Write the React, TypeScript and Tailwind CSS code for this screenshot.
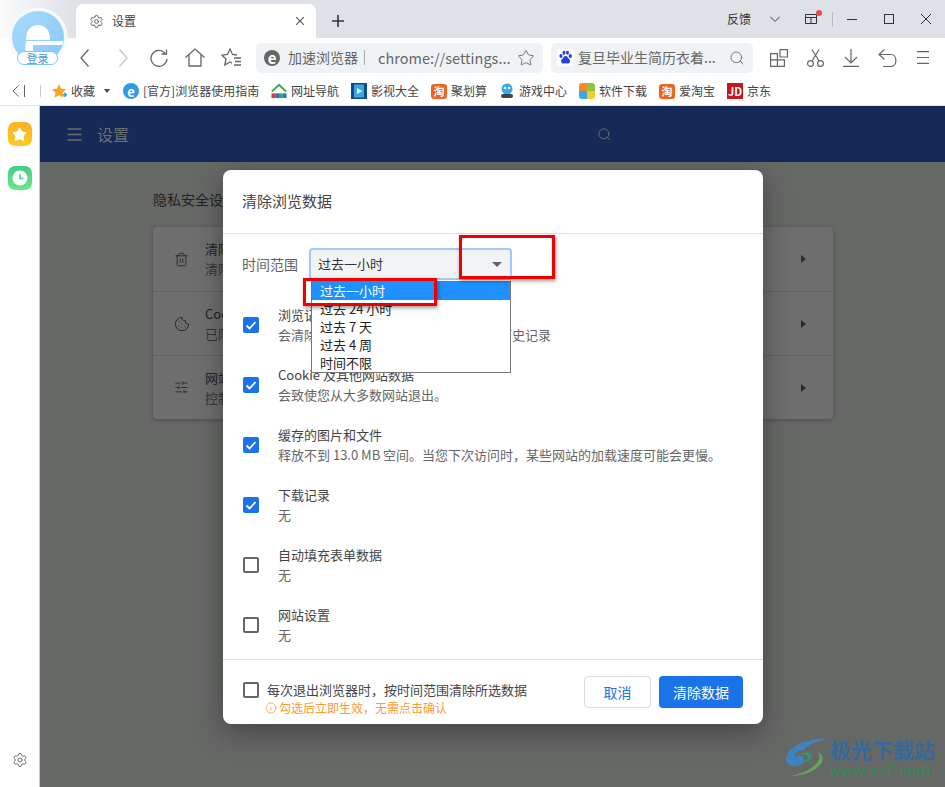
import { Cookie, Info, Menu, Search, Settings, SlidersHorizontal, Star, Trash2 } from 'lucide-react';

const bookmarks = [
    { label: '[官方]浏览器使用指南', icon: <OfficialIcon />, width: 'w-[148px]' },
    { label: '网址导航', icon: <NavIcon />, width: 'w-[80px]' },
    { label: '影视大全', icon: <FilmIcon />, width: 'w-[80px]' },
    { label: '聚划算', icon: <TaoIcon />, width: 'w-[68px]' },
    { label: '游戏中心', icon: <GameIcon />, width: 'w-[80px]' },
    { label: '软件下载', icon: <SoftIcon />, width: 'w-[80px]' },
    { label: '爱淘宝', icon: <TaoIcon />, width: 'w-[68px]' },
    { label: '京东', icon: <JdIcon />, width: 'w-[60px]' },
];

const options = ['过去一小时', '过去 24 小时', '过去 7 天', '过去 4 周', '时间不限'];

const dataRows = [
    { title: '浏览记录', detail: '会清除所有已同步的设备以及帐号中的历史记录', checked: true },
    { title: 'Cookie 及其他网站数据', detail: '会致使您从大多数网站退出。', checked: true },
    { title: '缓存的图片和文件', detail: '释放不到 13.0 MB 空间。当您下次访问时，某些网站的加载速度可能会更慢。', checked: true },
    { title: '下载记录', detail: '无', checked: true },
    { title: '自动填充表单数据', detail: '无', checked: false },
    { title: '网站设置', detail: '无', checked: false },
];

const settingsRows = [
    { title: '清除浏览数据', detail: '清除浏览记录、Cookie、缓存及其他数据', icon: <Trash2 className="size-[15px]" strokeWidth={1.5} /> },
    { title: 'Cookie 及其他网站数据', detail: '已阻止无痕模式下的第三方 Cookie', icon: <Cookie className="size-[16px]" strokeWidth={1.5} /> },
    { title: '网站设置', detail: '控制网站可以使用和显示什么信息', icon: <SlidersHorizontal className="size-[15px]" strokeWidth={1.5} /> },
];

export default function App() {
    return (
        <div className="relative flex h-[787px] w-[945px] flex-col overflow-hidden bg-white font-['Noto_Sans_CJK_SC','Liberation_Sans',sans-serif] text-[12px] text-[#444]">
            <TabStrip />
            <Toolbar />
            <BookmarkBar />
            <div className="flex min-h-0 flex-1 border-t border-[#e4e6ea]">
                <Sidebar />
                <SettingsPage />
            </div>
            <Logo />
            <ClearDataDialog />
            <Watermark />
        </div>
    );
}

function TabStrip() {
    return (
        <div className="flex h-[38px] shrink-0 items-end bg-[#dee1e6]">
            <div className="h-full w-[76px] bg-gradient-to-r from-[#fbfbfc] to-[#dee1e6]" />
            <div className="flex h-[34px] w-[240px] items-center rounded-t-[7px] bg-white pl-[13px] pr-[12px]">
                <Settings className="size-[15px] text-[#555]" strokeWidth={1.5} />
                <span className="ml-[8px] flex-1 text-[12px] text-[#444]">设置</span>
                <svg className="size-[8px]" viewBox="0 0 8 8" fill="none" stroke="#555" strokeWidth="1.1">
                    <path d="M0 0l8 8M8 0 0 8" />
                </svg>
            </div>
            <svg className="mb-[11px] ml-[16px] size-[12px]" viewBox="0 0 12 12" fill="none" stroke="#333" strokeWidth="1.6">
                <path d="M6 0v12M0 6h12" />
            </svg>
            <div className="mb-[6px] ml-auto flex h-[26px] items-center text-[#333]">
                <span className="text-[12px]">反馈</span>
                <svg className="ml-[19px] h-[6px] w-[10px]" viewBox="0 0 10 6" fill="none" stroke="#444" strokeWidth="1">
                    <path d="M0 .5l5 5 5-5" />
                </svg>
                <div className="relative ml-[25px]">
                    <svg className="block h-[10px] w-[12px]" viewBox="0 0 12 10" fill="none" stroke="#333" strokeWidth="1">
                        <path d="M.5.5h11v9H.5zM.5 3.500h11M6 3.500v6" />
                    </svg>
                    <span className="absolute right-[-5px] top-[-4px] size-[6px] rounded-full bg-[#ee4a4a]" />
                </div>
                <span className="ml-[15px] h-[15px] w-px bg-[#b5b8bd]" />
                <span className="ml-[14px] h-px w-[10px] bg-[#333]" />
                <span className="ml-[27px] size-[10px] border border-[#333]" />
                <svg className="ml-[27px] mr-[14px] size-[10px]" viewBox="0 0 10 10" fill="none" stroke="#333" strokeWidth="1">
                    <path d="M0 0l10 10M10 0 0 10" />
                </svg>
            </div>
        </div>
    );
}

function Toolbar() {
    return (
        <div className="flex h-[39px] shrink-0 items-center bg-white">
            <svg className="ml-[80px] h-[18px] w-[9px]" viewBox="0 0 9 18" fill="none" stroke="#666" strokeWidth="1.3">
                <path d="M8.500.5 1 9l7.500 8.500" />
            </svg>
            <svg className="ml-[30px] h-[18px] w-[9px]" viewBox="0 0 9 18" fill="none" stroke="#c4c4c4" strokeWidth="1.3">
                <path d="M.5.5 8 9 .5 17.500" />
            </svg>
            <svg className="ml-[22px] size-[18px]" viewBox="0 0 18 18" fill="none" stroke="#666" strokeWidth="1.3">
                <path d="M15 4A8 8 0 1 0 17 10M16.500 .5V5h-5" />
            </svg>
            <svg className="ml-[17px] h-[19px] w-[20px]" viewBox="0 0 20 19" fill="none" stroke="#666" strokeWidth="1.3">
                <path d="M.5 9.500 10 1l9.500 8.500M4 7v11h12V7" />
            </svg>
            <svg className="ml-[16px] h-[19px] w-[21px]" viewBox="0 0 21 19" fill="none" stroke="#666" strokeWidth="1.3">
                <path d="M16 7 11.500 6.500 9 1 6.500 6.500 1 7.200 5 11l-1.200 6L9 14l2 1.200" />
                <path d="M13 10h7M14 13.500h6M13 17h7" />
            </svg>
            <div className="ml-[14px] flex h-[30px] w-[287px] items-center rounded-[5px] bg-[#f0f3f6] pl-[8px] pr-[8px]">
                <span className="flex size-[16px] shrink-0 items-center justify-center rounded-full bg-[#666] text-[15px] font-bold leading-none text-white">
                    e
                </span>
                <span className="ml-[8px] text-[14px] text-[#666]">加速浏览器</span>
                <span className="ml-[6px] h-[15px] w-px bg-[#aaa]" />
                <span className="ml-[13px] flex-1 whitespace-nowrap text-[14.500px] text-[#666]">chrome://settings...</span>
                <Star className="size-[18px] text-[#666]" strokeWidth={1.2} />
            </div>
            <div className="ml-[8px] flex h-[30px] w-[202px] items-center rounded-[5px] bg-[#f0f3f6] pl-[6px] pr-[8px]">
                <svg className="size-[17px] shrink-0 rounded-[3px] bg-white" viewBox="0 0 17 17" fill="#2b3fd8">
                    <ellipse cx="4" cy="7" rx="1.600" ry="2" />
                    <ellipse cx="7" cy="3.800" rx="1.500" ry="2" />
                    <ellipse cx="10.500" cy="3.800" rx="1.500" ry="2" />
                    <ellipse cx="13.300" cy="7" rx="1.600" ry="2" />
                    <path d="M8.600 7c-2 0-2.200 2.200-3.600 3.200-1.600 1.200-1 4.300 1.500 4.300 1 0 1.400-.3 2.100-.3s1.200.3 2.100.3c2.500 0 3.100-3.100 1.500-4.300C11 9.200 10.600 7 8.600 7z" />
                </svg>
                <span className="ml-[4px] flex-1 truncate text-[14px] text-[#666]">复旦毕业生简历衣着...</span>
                <Search className="size-[16px] text-[#666]" strokeWidth={1.3} />
            </div>
            <svg className="ml-[17px] size-[18px]" viewBox="0 0 18 18" fill="none" stroke="#666" strokeWidth="1.2">
                <path d="M.6 4.600h6.800v6.200H.6zM.6 10.800h6.800v6.600H.6zM7.400 10.800h7v6.600h-7zM10 .6h7.400v7.400H10z" />
            </svg>
            <svg className="ml-[19px] h-[18px] w-[17px]" viewBox="0 0 17 18" fill="none" stroke="#666" strokeWidth="1.2">
                <circle cx="3.500" cy="14.500" r="2.900" />
                <circle cx="13.500" cy="14.500" r="2.900" />
                <path d="M5 12 12 .5M12 12 5 .5" />
            </svg>
            <svg className="ml-[19px] h-[18px] w-[16px]" viewBox="0 0 16 18" fill="none" stroke="#666" strokeWidth="1.2">
                <path d="M8 0v14M2 8l6 6 6-6M0 17.400h16" />
            </svg>
            <svg className="ml-[19px] h-[18px] w-[19px]" viewBox="0 0 19 18" fill="none" stroke="#666" strokeWidth="1.2">
                <path d="M6.500.5 1 5.500l5.500 5M1 5.500h12c6.500 0 6.500 12 0 12H5" />
            </svg>
            <svg className="ml-[20px] h-[13px] w-[12px]" viewBox="0 0 12 13" fill="none" stroke="#666" strokeWidth="1.1">
                <path d="M0 .6h12M0 6.500h12M0 12.400h12" />
            </svg>
        </div>
    );
}

function BookmarkBar() {
    return (
        <div className="flex h-[28px] shrink-0 items-center bg-white text-[#444]">
            <svg className="ml-[12px] h-[12px] w-[7px]" viewBox="0 0 7 12" fill="none" stroke="#666" strokeWidth="1">
                <path d="M6.500.5 1 6l5.500 5.500" />
            </svg>
            <span className="ml-[5px] h-[12px] w-px bg-[#666]" />
            <span className="ml-[15px] h-[12px] w-px bg-[#ccc]" />
            <svg className="ml-[10px] size-[17px]" viewBox="0 0 17 17" fill="#f8a521">
                <path d="M8 1l2.200 4.700 5 .6-3.700 3.500 1 5-4.500-2.500-4.500 2.500 1-5L1 6.300l5-.6z" />
                <path d="M12 11h4v1.500h-4zM13.300 9.500h1.500v4.500h-1.500z" fill="#2d9be8" />
            </svg>
            <span className="ml-[3px]">收藏</span>
            <span className="ml-[9px] mr-[13px] border-x-[3px] border-t-[4px] border-x-transparent border-t-[#444]" />
            {bookmarks.map((bookmark) => (
                <div key={bookmark.label} className={`flex items-center gap-[4px] ${bookmark.width}`}>
                    {bookmark.icon}
                    <span className="whitespace-nowrap">{bookmark.label}</span>
                </div>
            ))}
        </div>
    );
}

function Sidebar() {
    return (
        <div className="flex w-[40px] shrink-0 flex-col items-center border-r border-[#c9c9c9] bg-white pt-[16px]">
            <div className="flex size-[24px] items-center justify-center rounded-[7px] bg-gradient-to-b from-[#fdb022] to-[#ffc928]">
                <Star className="size-[15px] fill-white text-white" />
            </div>
            <div className="mt-[20px] flex size-[24px] items-center justify-center rounded-[7px] bg-gradient-to-b from-[#42cf82] to-[#68e888]">
                <svg className="size-[16px]" viewBox="0 0 16 16">
                    <circle cx="8" cy="8" r="7.500" fill="white" />
                    <path d="M8 4v4.500h3.500" fill="none" stroke="#48d484" strokeWidth="1.600" />
                </svg>
            </div>
            <Settings className="mb-[19px] mt-auto size-[16px] text-[#666]" strokeWidth={1.4} />
        </div>
    );
}

function SettingsPage() {
    return (
        <div className="flex min-w-0 flex-1 flex-col bg-[#666866]">
            <div className="flex h-[56px] shrink-0 items-center bg-[#152a57] pl-[25px] text-[#6c6f70]">
                <Menu className="size-[19px]" strokeWidth={2} />
                <span className="ml-[13px] text-[16px]">设置</span>
                <Search className="ml-[468px] size-[15px]" strokeWidth={1.500} />
            </div>
            <div className="pl-[113px] pr-[112px] pt-[27px] text-[#222]">
                <div className="h-[38px] text-[14px] leading-[20px]">隐私安全设置</div>
                <div className="rounded-[4px] bg-[#6e6e6e] shadow-[0_1px_4px_rgba(0,0,0,0.25)]">
                    {settingsRows.map((row, index) => (
                        <div
                            key={row.title}
                            className={`flex h-[64px] items-center pl-[21px] pr-[27px] ${index > 0 ? 'border-t border-[#626262]' : ''}`}
                        >
                            <span className="flex w-[30px] text-[#2c2c2c]">{row.icon}</span>
                            <div className="ml-[1px] flex-1 text-[13px] leading-[20px]">
                                <div className="text-[#222]">{row.title}</div>
                                <div className="text-[#353535]">{row.detail}</div>
                            </div>
                            <span className="border-y-[4px] border-l-[5px] border-y-transparent border-l-[#2c2c2c]" />
                        </div>
                    ))}
                </div>
            </div>
        </div>
    );
}

function ClearDataDialog() {
    return (
        <div className="absolute left-[223px] top-[170px] flex h-[554px] w-[540px] flex-col rounded-[8px] bg-white shadow-[0_8px_28px_rgba(0,0,0,0.35)]">
            <div className="flex h-[64px] shrink-0 items-center border-b border-[#e0e0e0] pl-[19px] text-[15px] text-[#444]">
                清除浏览数据
            </div>
            <div className="flex h-[46px] shrink-0 items-end pl-[19px]">
                <span className="mb-[6px] w-[67px] text-[14px] leading-[20px] text-[#5f6368]">时间范围</span>
                <div className="flex h-[32px] w-[203px] items-center justify-between rounded-[4px] border-2 border-[#a6c8f5] bg-[#f1f3f4] pl-[7px] pr-[8px] text-[13px] text-[#333]">
                    过去一小时
                    <span className="border-x-[5px] border-t-[5px] border-x-transparent border-t-[#5f6368]" />
                </div>
            </div>
            <div className="flex min-h-0 flex-1 flex-col pt-[15px]">
                {dataRows.map((row) => (
                    <div key={row.title} className="flex h-[60px] shrink-0 items-center pl-[20px]">
                        <CheckBox checked={row.checked} />
                        <div className="ml-[19px] text-[13px] leading-[20px]">
                            <div className="text-[#444]">{row.title}</div>
                            <div className="text-[#666]">{row.detail}</div>
                        </div>
                    </div>
                ))}
            </div>
            <div className="flex h-[65px] shrink-0 items-center border-t border-[#e0e0e0] pl-[20px] pr-[20px]">
                <div className="mt-[14px] flex flex-col leading-[18px]">
                    <div className="flex items-center">
                        <span className="size-[16px] rounded-[2px] border-2 border-[#666]" />
                        <span className="ml-[8px] text-[13px] text-[#444]">每次退出浏览器时，按时间范围清除所选数据</span>
                    </div>
                    <div className="ml-[22px] flex items-center gap-[2px] text-[12px] text-[#ff9a35]">
                        <Info className="size-[12px]" strokeWidth={1.500} />
                        勾选后立即生效，无需点击确认
                    </div>
                </div>
                <button className="ml-auto h-[32px] w-[67px] rounded-[4px] border border-[#dadce0] bg-white text-[14px] text-[#1a73e8]">
                    取消
                </button>
                <button className="ml-[8px] h-[32px] w-[84px] rounded-[4px] bg-[#1a73e8] text-[14px] text-white">
                    清除数据
                </button>
            </div>
            {/* open select list and the red marks drawn on top of the dialog */}
            <div className="absolute left-[88px] top-[111px] w-[200px] border border-[#767676] bg-white text-[13px] leading-[18px] text-[#222]">
                {options.map((option, index) => (
                    <div key={option} className={`h-[18px] pl-[8px] ${index === 0 ? 'bg-[#1e90ff] text-white' : ''}`}>
                        {option}
                    </div>
                ))}
            </div>
            <div className="absolute left-[236px] top-[65px] h-[44px] w-[96px] border-[3px] border-[#ee0000] shadow-[1px_2px_4px_rgba(0,0,0,0.4)]" />
            <div className="absolute left-[80px] top-[108px] h-[28px] w-[134px] border-[3px] border-[#ee0000] shadow-[1px_2px_4px_rgba(0,0,0,0.4)]" />
        </div>
    );
}

function CheckBox({ checked }: { checked: boolean }) {
    if (!checked) {
        return <span className="size-[16px] shrink-0 rounded-[2px] border-2 border-[#666]" />;
    }

    return (
        <span className="flex size-[16px] shrink-0 items-center justify-center rounded-[2px] bg-[#1a73e8]">
            <svg className="size-[12px]" viewBox="0 0 12 12" fill="none" stroke="white" strokeWidth="1.800">
                <path d="M1.500 6.500 4.500 9.500 10.500 3" />
            </svg>
        </span>
    );
}

function Logo() {
    return (
        <div className="absolute left-[8px] top-[6px] size-[60px]">
            <svg className="size-[60px]" viewBox="0 0 60 60">
                <defs>
                    <linearGradient id="logoBlue" x1="0" y1="0" x2="1" y2="1">
                        <stop offset="0" stopColor="#a9dafc" />
                        <stop offset="1" stopColor="#86c9f8" />
                    </linearGradient>
                </defs>
                <circle cx="30" cy="31" r="29.500" fill="#f7f8fa" />
                <circle cx="30" cy="31" r="26" fill="url(#logoBlue)" />
                <path d="M18 34c0-10 5-15 12-15s12 5 12 14v1z" fill="white" />
                <path d="M18 35h37l-1 4H25v8h-7c-1-4-1-8 0-12z" fill="white" />
            </svg>
            <span className="absolute bottom-[1px] left-[9px] flex h-[14px] w-[41px] items-center justify-center rounded-full border border-[#7cc3f7] bg-white text-[11px] leading-none text-[#3b9be0]">
                登录
            </span>
        </div>
    );
}

function Watermark() {
    return (
        <div className="absolute left-[785px] top-[737px] flex items-center">
            <svg className="h-[40px] w-[44px] shrink-0" viewBox="0 0 44 40" fill="none">
                <path d="M43 1C26 2 8 6 2 18c-3 7 2 12 9 11 7-1 10-6 6-10-3-2-7 0-6 3-3-4 1-9 7-9C24 7 34 4 43 1z" fill="#3d84c0" />
                <path d="M33 15c6 9-7 20-27 24 12 0 26-5 31-14 2-4 0-8-4-10z" fill="#63a85a" />
                <path d="M14 17c6-3 13-2 13 2s-6 7-12 5c4 0 8-2 8-4s-5-3-9-3z" fill="#3f8f6a" />
            </svg>
            <div className="ml-[1px] flex flex-col">
                <span className="text-[21px] font-bold leading-[24px] text-[#33699b]">极光下载站</span>
                <span className="mt-[2px] font-['Liberation_Sans',sans-serif] text-[16.500px] leading-[14px] text-[#2f8a55]">www.xz7.com</span>
            </div>
        </div>
    );
}

function OfficialIcon() {
    return (
        <span className="flex size-[16px] items-center justify-center rounded-full bg-[#2d9be8] text-[13px] font-bold leading-none text-white">
            e
        </span>
    );
}

function NavIcon() {
    return (
        <svg className="size-[16px]" viewBox="0 0 17 17">
            <path d="M1 9 8.500 2 16 9" fill="none" stroke="#3aa757" strokeWidth="2" />
            <rect x="0.500" y="11" width="4" height="5" fill="#e23b3b" />
            <rect x="4.500" y="11" width="4" height="5" fill="#2d6fd8" />
            <rect x="8.500" y="11" width="4" height="5" fill="#3aa757" />
            <rect x="12.500" y="11" width="4" height="5" fill="#2d6fd8" />
        </svg>
    );
}

function FilmIcon() {
    return (
        <svg className="size-[16px]" viewBox="0 0 16 16">
            <rect width="16" height="16" fill="#0f4c81" />
            <rect x="3" y="1.500" width="10" height="13" fill="#3aa7e8" />
            <path d="M6 5v6l5-3z" fill="white" />
        </svg>
    );
}

function TaoIcon() {
    return (
        <span className="flex h-[15px] w-[16px] items-center justify-center rounded-[3px] bg-[#f0641e] text-[11px] font-bold leading-none text-white">
            淘
        </span>
    );
}

function GameIcon() {
    return (
        <svg className="size-[16px]" viewBox="0 0 16 16">
            <ellipse cx="8" cy="6" rx="5.500" ry="5.500" fill="#38a9e8" />
            <circle cx="6" cy="5" r="1.300" fill="white" />
            <circle cx="10" cy="5" r="1.300" fill="white" />
            <rect x="2" y="11" width="12" height="4" rx="2" fill="#444" />
        </svg>
    );
}

function SoftIcon() {
    return (
        <span className="grid size-[16px] grid-cols-2 overflow-hidden rounded-[3px]">
            <span className="bg-[#f58a2c]" />
            <span className="bg-[#8cc63f]" />
            <span className="bg-[#3aa7e8]" />
            <span className="bg-[#f8c92c]" />
        </span>
    );
}

function JdIcon() {
    return (
        <span className="flex size-[16px] items-center justify-center bg-[#c9151e] text-[11px] font-bold leading-none text-white">
            JD
        </span>
    );
}
